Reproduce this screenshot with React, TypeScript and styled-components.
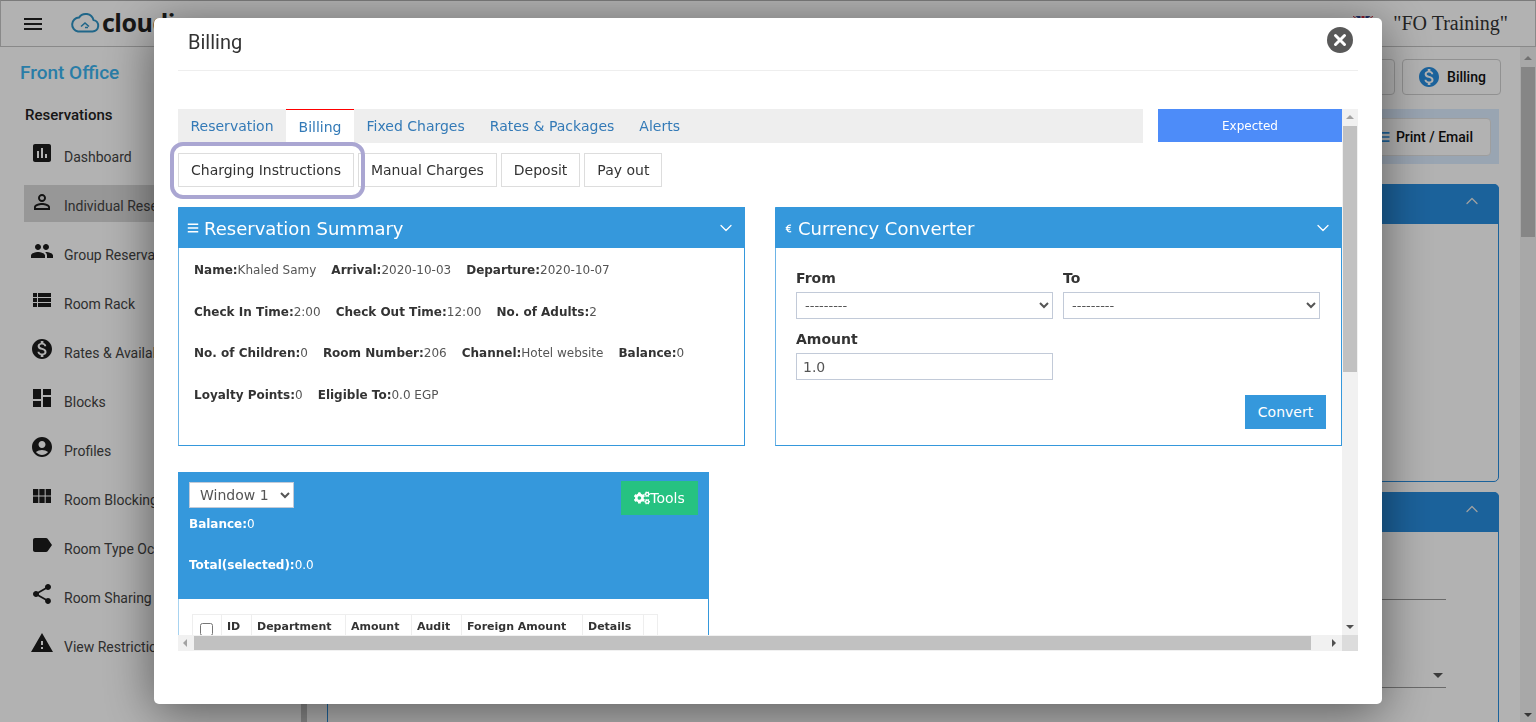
import styled, { createGlobalStyle } from 'styled-components';
import {
  MdAccountCircle,
  MdAssessment,
  MdDashboard,
  MdLabel,
  MdMenu,
  MdMonetizationOn,
  MdPeople,
  MdPersonOutline,
  MdShare,
  MdViewList,
  MdViewModule,
  MdWarning,
} from 'react-icons/md';
import { FaBars, FaCogs, FaEuroSign } from 'react-icons/fa';
import { ChevronDown, ChevronUp } from 'lucide-react';

const UI_FONT = `"DejaVu Sans", Verdana, sans-serif`;

const GlobalStyle = createGlobalStyle`
  html, body {
    margin: 0;
    padding: 0;
    height: 100%;
    overflow: hidden;
    background: #fff;
    font-family: Roboto, sans-serif;
  }
  * { box-sizing: border-box; }
`;

/* ---- page behind the dialog ---- */

const Page = styled.div`
  display: flex;
  flex-direction: column;
  width: 1536px;
  height: 722px;
  overflow: hidden;
`;

const TopBar = styled.header`
  display: flex;
  align-items: center;
  flex: 0 0 47px;
  padding-left: 20px;
  border: 1px solid #c4c4c4;
  border-top-color: #b0b0b0;
  color: #222;
`;

const Logo = styled.div`
  display: flex;
  align-items: center;
  gap: 2px;
  margin-left: 25px;
  margin-bottom: 4px;
  font-family: 'Open Sans', sans-serif;
  font-size: 25px;
  font-weight: 700;
  letter-spacing: -0.5px;
  color: #222;
`;

const TopBarRight = styled.div`
  display: flex;
  align-items: center;
  margin-left: auto;
  padding-right: 27px;
`;

const FlagIcon = styled.svg`
  margin-left: 308px;
  margin-right: 20px;
`;

const UserName = styled.span`
  font-family: 'Liberation Serif', serif;
  font-size: 20px;
  color: #333;
`;

const PageBody = styled.div`
  display: flex;
  flex: 1;
  min-height: 0;
`;

const Sidebar = styled.aside`
  flex: 0 0 301px;
  padding: 0 0 0 24px;
`;

const SideTitle = styled.h2`
  margin: 14px 0 0 -4px;
  font-size: 19px;
  line-height: 24px;
  font-weight: 500;
  color: #3cb4f0;
`;

const SideHeading = styled.h3`
  margin: 20px 0 11px 1px;
  font-size: 15px;
  line-height: 20px;
  font-weight: 500;
  color: #222;
`;

const SideItem = styled.div<{ $active?: boolean }>`
  display: flex;
  align-items: center;
  gap: 10px;
  height: 37px;
  margin-bottom: 12px;
  padding-left: 6px;
  font-size: 14px;
  color: #444;
  white-space: nowrap;
  background: ${(props) => (props.$active ? '#d9d9d9' : 'transparent')};
  svg {
    color: #1c1c1c;
    flex: none;
    margin-top: -4px;
  }
  span {
    padding-top: 4px;
  }
`;

const SideRail = styled.div`
  flex: 0 0 6px;
  background: #c4c4c4;
`;

const Main = styled.main`
  flex: 1;
  min-width: 0;
  padding: 12px 21px 0 20px;
`;

const PageActions = styled.div`
  display: flex;
  justify-content: flex-end;
  gap: 7px;
  margin-right: -2px;
  height: 36px;
`;

const PageAction = styled.button`
  display: flex;
  align-items: center;
  justify-content: center;
  gap: 6px;
  width: ${(props: { $w: number }) => props.$w}px;
  height: 36px;
  padding: 0;
  border: 1px solid #d0d0d0;
  border-radius: 4px;
  background: #fff;
  font-family: Roboto, sans-serif;
  font-size: 14px;
  font-weight: 500;
  color: #111;
  svg {
    color: #288ddf;
  }
`;

const PrintBand = styled.div`
  display: flex;
  justify-content: flex-end;
  align-items: center;
  height: 55px;
  margin-top: 14px;
  padding-right: 8px;
  background: #dcecff;
`;

const PrintButton = styled.button`
  display: flex;
  align-items: center;
  gap: 4px;
  height: 38px;
  padding: 0 17px 0 0;
  border: 1px solid #e3e3e3;
  border-radius: 4px;
  background: #fff;
  font-family: Roboto, sans-serif;
  font-size: 14px;
  font-weight: 500;
  color: #111;
  svg {
    color: #288ddf;
  }
`;

const BgPanel = styled.section<{ $h: number }>`
  height: ${(props) => props.$h}px;
  margin-top: ${(props: { $top?: number }) => props.$top ?? 10}px;
  border: 1px solid #288ddf;
  border-radius: 5px 5px 5px 5px;
`;

const BgPanelHead = styled.div`
  display: flex;
  justify-content: flex-end;
  align-items: center;
  height: 40px;
  padding: 0 17px 6px 0;
  margin: -1px -1px 0;
  border-radius: 5px 5px 0 0;
  background: #288ddf;
  color: #e6e6e6;
`;

const BgFields = styled.div`
  display: flex;
  flex-direction: column;
  align-items: flex-end;
  padding-right: 52px;
`;

const BgField = styled.div<{ $h: number }>`
  display: flex;
  align-items: flex-end;
  justify-content: flex-end;
  width: 400px;
  height: ${(props) => props.$h}px;
  padding: 0 3px 9px 0;
  border-bottom: 1px solid #999;
`;

const BgCaret = styled.i`
  width: 0;
  height: 0;
  border-left: 5px solid transparent;
  border-right: 5px solid transparent;
  border-top: 5px solid #555;
`;

const PageScroll = styled.div`
  position: relative;
  flex: 0 0 16px;
  background: #f1f1f1;
  padding-top: 20px;
`;

const PageThumb = styled.div`
  height: 170px;
  margin: 0 1px;
  background: #c1c1c1;
`;

const PageArrowDown = styled.i`
  position: absolute;
  left: 4px;
  bottom: 5px;
  border-left: 4px solid transparent;
  border-right: 4px solid transparent;
  border-top: 4px solid #505050;
`;

const PageArrowUp = styled.i`
  position: absolute;
  left: 4px;
  top: 9px;
  border-left: 4px solid transparent;
  border-right: 4px solid transparent;
  border-bottom: 4px solid #a3a3a3;
`;

/* ---- dialog ---- */

const Backdrop = styled.div`
  position: fixed;
  inset: 0;
  background: rgba(0, 0, 0, 0.3);
`;

const Modal = styled.div`
  position: fixed;
  left: 154px;
  top: 18px;
  width: 1228px;
  height: 686px;
  padding: 0 24px;
  border-radius: 5px;
  background: #fff;
  box-shadow: 0 8px 50px rgba(0, 0, 0, 0.5);
  font-family: ${UI_FONT};
`;

const ModalHeader = styled.div`
  display: flex;
  align-items: center;
  justify-content: space-between;
  height: 53px;
  padding: 0 5px 8px 10px;
  border-bottom: 1px solid #eee;
`;

const ModalTitle = styled.h4`
  margin: 3px 0 0;
  font-family: Roboto, sans-serif;
  font-size: 20px;
  line-height: 24px;
  font-weight: 400;
  color: #333;
`;

const CloseButton = styled.button`
  display: flex;
  width: 26px;
  height: 26px;
  padding: 0;
  border: 0;
  border-radius: 50%;
  background: #595959;
  align-items: center;
  justify-content: center;
`;

const ScrollFrame = styled.div`
  position: relative;
  display: grid;
  grid-template-columns: 1164px 16px;
  grid-template-rows: 526px 16px;
  margin-top: 38px;
`;

const Highlight = styled.div`
  position: absolute;
  left: -8px;
  top: 33px;
  width: 195px;
  height: 57px;
  border: 4px solid #aaa6d2;
  border-radius: 13px;
  pointer-events: none;
`;

const Viewport = styled.div`
  overflow: hidden;
`;

const VBar = styled.div`
  position: relative;
  background: #f1f1f1;
  padding-top: 17px;
`;

const VThumb = styled.div`
  height: 246px;
  margin: 0 1px;
  background: #c1c1c1;
`;

const HBar = styled.div`
  position: relative;
  background: #f1f1f1;
  padding: 1px 0 1px 16px;
`;

const HThumb = styled.div`
  width: 1117px;
  height: 14px;
  background: #c1c1c1;
`;

const Corner = styled.div`
  background: #dcdcdc;
`;

const ArrowUp = styled.i`
  position: absolute;
  top: 6px;
  left: 4px;
  border-left: 4px solid transparent;
  border-right: 4px solid transparent;
  border-bottom: 4px solid #a3a3a3;
`;

const ArrowDown = styled.i`
  position: absolute;
  bottom: 6px;
  left: 4px;
  border-left: 4px solid transparent;
  border-right: 4px solid transparent;
  border-top: 4px solid #505050;
`;

const ArrowLeft = styled.i`
  position: absolute;
  left: 5px;
  top: 4px;
  border-top: 4px solid transparent;
  border-bottom: 4px solid transparent;
  border-right: 4px solid #a3a3a3;
`;

const ArrowRight = styled.i`
  position: absolute;
  right: 6px;
  top: 4px;
  border-top: 4px solid transparent;
  border-bottom: 4px solid transparent;
  border-left: 4px solid #505050;
`;

const TabRow = styled.div`
  display: flex;
  height: 34px;
`;

const Tabs = styled.div`
  display: flex;
  width: 965px;
  background: #eee;
`;

const Tab = styled.a<{ $active?: boolean }>`
  display: block;
  padding: 0 12.5px;
  font-size: 14px;
  line-height: 34px;
  color: #337ab7;
  background: ${(props) => (props.$active ? '#fff' : 'transparent')};
  border-top: ${(props) => (props.$active ? '1px solid #f00' : '0')};
  white-space: nowrap;
`;

const StatusBadge = styled.div`
  width: 184px;
  height: 33px;
  margin-left: 15px;
  background: #4d8cf9;
  color: #fff;
  font-size: 12px;
  line-height: 34px;
  text-align: center;
`;

const SubTabs = styled.div`
  display: flex;
  gap: 4px;
  margin-top: 10px;
  height: 34px;
`;

const SubTab = styled.button`
  height: 34px;
  padding: 0 12px;
  border: 1px solid #ddd;
  background: #fff;
  font-family: ${UI_FONT};
  font-size: 14px;
  color: #333;
  white-space: nowrap;
`;

const PanelGrid = styled.div`
  display: grid;
  grid-template-columns: 567px 567px;
  gap: 30px;
  margin-top: 20px;
`;

const Panel = styled.section`
  height: 239px;
  border: 1px solid #3598dc;
  border-top-width: 1px;
  border-left-color: #6db4e6;
  background: #fff;
`;

const PanelHead = styled.div`
  display: flex;
  align-items: center;
  height: 40px;
  margin: 0 -1px;
  padding: 0 9px;
  background: #3598dc;
  color: #fff;
  font-size: 18px;
`;

const PanelTitle = styled.span`
  flex: 1;
  margin-left: 5px;
`;

const SummaryBody = styled.div`
  padding: 2px 15px;
`;

const InfoRow = styled.div`
  display: flex;
  gap: 15px;
  font-size: 12px;
  line-height: 41.6px;
  color: #555;
`;

const InfoLabel = styled.b`
  color: #333;
`;

const ConverterBody = styled.div`
  padding: 20px 15px 0 20px;
`;

const FormGrid = styled.div`
  display: grid;
  grid-template-columns: 257px 257px;
  column-gap: 10px;
`;

const FormField = styled.div`
  margin-bottom: 10px;
`;

const FormLabel = styled.label`
  display: block;
  margin-bottom: 4px;
  font-size: 14px;
  line-height: 20px;
  font-weight: 700;
  color: #333;
`;

const FormSelect = styled.select`
  display: block;
  width: 100%;
  height: 27px;
  padding: 0 4px;
  border: 1px solid #c2cad8;
  background: #fff;
  font-family: ${UI_FONT};
  font-size: 13px;
  color: #555;
`;

const FormInput = styled.input`
  display: block;
  width: 100%;
  height: 27px;
  padding: 0 6px;
  border: 1px solid #c2cad8;
  font-family: ${UI_FONT};
  font-size: 14px;
  color: #555;
`;

const ConvertRow = styled.div`
  display: flex;
  justify-content: flex-end;
  margin-top: 15px;
`;

const ConvertButton = styled.button`
  width: 81px;
  height: 34px;
  padding: 0;
  border: 0;
  background: #3598dc;
  color: #fff;
  font-family: ${UI_FONT};
  font-size: 14px;
`;

const WindowPanel = styled.section`
  width: 531px;
  margin-top: 26px;
  border: 1px solid #3598dc;
  border-left-color: #a8d3f0;
  height: 300px;
`;

const WindowHead = styled.div`
  height: 127px;
  margin: -1px -1px 0;
  padding: 9px 11px;
  background: #3598dc;
  color: #fff;
  font-size: 12px;
`;

const WindowControls = styled.div`
  display: flex;
  justify-content: space-between;
  height: 34px;
`;

const WindowSelect = styled.select`
  width: 105px;
  height: 26px;
  margin-top: 1px;
  padding: 0 6px;
  border: 1px solid #c2cad8;
  background: #fff;
  font-family: ${UI_FONT};
  font-size: 14px;
  color: #555;
`;

const ToolsButton = styled.button`
  display: flex;
  align-items: center;
  justify-content: center;
  width: 77px;
  height: 34px;
  padding: 0;
  border: 0;
  background: #26c281;
  color: #fff;
  font-family: ${UI_FONT};
  font-size: 14px;
`;

const WindowLine = styled.div`
  line-height: 18px;
  margin-bottom: 23px;
`;

const TableWrap = styled.div`
  padding: 15px 13px;
`;

const ChargeTable = styled.table`
  border-collapse: collapse;
  table-layout: fixed;
  width: 465px;
  font-size: 11px;
  color: #333;
  th {
    height: 36px;
    padding: 3px 5px 0;
    border: 1px solid #eee;
    text-align: left;
    vertical-align: top;
    line-height: 18px;
  }
`;

const RowCheck = styled.input`
  margin: 5px 0 0 2px;
  width: 13px;
  height: 13px;
`;

const menuItems = [
  { label: 'Dashboard', icon: MdAssessment },
  { label: 'Individual Reservations', icon: MdPersonOutline, active: true },
  { label: 'Group Reservations', icon: MdPeople },
  { label: 'Room Rack', icon: MdViewList },
  { label: 'Rates & Availability', icon: MdMonetizationOn },
  { label: 'Blocks', icon: MdDashboard },
  { label: 'Profiles', icon: MdAccountCircle },
  { label: 'Room Blocking', icon: MdViewModule },
  { label: 'Room Type Occupancy', icon: MdLabel },
  { label: 'Room Sharing', icon: MdShare },
  { label: 'View Restrictions', icon: MdWarning },
];

const summaryRows = [
  [
    ['Name:', 'Khaled Samy'],
    ['Arrival:', '2020-10-03'],
    ['Departure:', '2020-10-07'],
  ],
  [
    ['Check In Time:', '2:00'],
    ['Check Out Time:', '12:00'],
    ['No. of Adults:', '2'],
  ],
  [
    ['No. of Children:', '0'],
    ['Room Number:', '206'],
    ['Channel:', 'Hotel website'],
    ['Balance:', '0'],
  ],
  [
    ['Loyalty Points:', '0'],
    ['Eligible To:', '0.0 EGP'],
  ],
];

const tableColumns = [
  { title: '', width: 29 },
  { title: 'ID', width: 30 },
  { title: 'Department', width: 94 },
  { title: 'Amount', width: 66 },
  { title: 'Audit', width: 50 },
  { title: 'Foreign Amount', width: 121 },
  { title: 'Details', width: 61 },
  { title: '', width: 14 },
];

function CloudLogo() {
  return (
    <svg width="30" height="22" viewBox="0 0 30 22" fill="none" stroke="#2f93c4" strokeWidth="2">
      <path d="M8 20.5h14.5a5.8 5.8 0 0 0 1-11.5A8 8 0 0 0 9 6.6 7 7 0 0 0 8 20.5z" />
      <path d="M11 15.5l4-3.5 4 3.5M15 16.5h3" strokeWidth="1.6" />
    </svg>
  );
}

function App() {
  return (
    <>
      <GlobalStyle />
      <Page>
        <TopBar>
          <MdMenu size={24} />
          <Logo>
            <CloudLogo />
            cloudinn
          </Logo>
          <TopBarRight>
            <svg width="14" height="12" viewBox="0 0 14 12" fill="none" stroke="#333" strokeWidth="1.5">
              <path d="M3 0v4M11 0v4M1 4h12" />
            </svg>
            <FlagIcon width="20" height="16" viewBox="0 0 20 16">
              <rect width="20" height="16" fill="#2b3f8c" />
              <path d="M0 0l20 16M20 0L0 16" stroke="#eee" strokeWidth="3" />
              <path d="M0 0l20 16M20 0L0 16" stroke="#c8283c" strokeWidth="1" />
              <path d="M10 0v16M0 8h20" stroke="#eee" strokeWidth="5" />
              <path d="M10 0v16M0 8h20" stroke="#c8283c" strokeWidth="3" />
            </FlagIcon>
            <UserName>"FO Training"</UserName>
          </TopBarRight>
        </TopBar>
        <PageBody>
          <Sidebar>
            <SideTitle>Front Office</SideTitle>
            <SideHeading>Reservations</SideHeading>
            {menuItems.map(({ label, icon: Icon, active }) => (
              <SideItem key={label} $active={active}>
                <Icon size={24} />
                <span>{label}</span>
              </SideItem>
            ))}
          </Sidebar>
          <SideRail />
          <Main>
            <PageActions>
              <PageAction $w={110}>Invoice</PageAction>
              <PageAction $w={99}>
                <MdMonetizationOn size={24} />
                Billing
              </PageAction>
            </PageActions>
            <PrintBand>
              <PrintButton>
                <MdMenu size={20} />
                Print / Email
              </PrintButton>
            </PrintBand>
            <BgPanel $h={298} $top={20}>
              <BgPanelHead>
                <ChevronUp size={20} strokeWidth={1.5} />
              </BgPanelHead>
            </BgPanel>
            <BgPanel $h={300} $top={10}>
              <BgPanelHead>
                <ChevronUp size={20} strokeWidth={1.5} />
              </BgPanelHead>
              <BgFields>
                <BgField $h={68} />
                <BgField $h={88}>
                  <BgCaret />
                </BgField>
              </BgFields>
            </BgPanel>
          </Main>
          <PageScroll>
            <PageArrowUp />
            <PageThumb />
            <PageArrowDown />
          </PageScroll>
        </PageBody>
      </Page>
      <Backdrop />
      <Modal>
        <ModalHeader>
          <ModalTitle>Billing</ModalTitle>
          <CloseButton aria-label="Close">
            <svg width="14" height="14" viewBox="0 0 14 14" stroke="#fff" strokeWidth="3" strokeLinecap="round">
              <path d="M2.5 2.5l9 9M11.5 2.5l-9 9" />
            </svg>
          </CloseButton>
        </ModalHeader>
        <ScrollFrame>
          <Viewport>
            <TabRow>
              <Tabs>
                <Tab>Reservation</Tab>
                <Tab $active>Billing</Tab>
                <Tab>Fixed Charges</Tab>
                <Tab>Rates &amp; Packages</Tab>
                <Tab>Alerts</Tab>
              </Tabs>
              <StatusBadge>Expected</StatusBadge>
            </TabRow>
            <SubTabs>
              <SubTab>Charging Instructions</SubTab>
              <SubTab>Manual Charges</SubTab>
              <SubTab>Deposit</SubTab>
              <SubTab>Pay out</SubTab>
            </SubTabs>
            <PanelGrid>
              <Panel>
                <PanelHead>
                  <FaBars size={12} />
                  <PanelTitle>Reservation Summary</PanelTitle>
                  <ChevronDown size={20} strokeWidth={1.5} />
                </PanelHead>
                <SummaryBody>
                  {summaryRows.map((row) => (
                    <InfoRow key={row[0][0]}>
                      {row.map(([label, value]) => (
                        <span key={label}>
                          <InfoLabel>{label}</InfoLabel>
                          {value}
                        </span>
                      ))}
                    </InfoRow>
                  ))}
                </SummaryBody>
              </Panel>
              <Panel>
                <PanelHead>
                  <FaEuroSign size={9} />
                  <PanelTitle>Currency Converter</PanelTitle>
                  <ChevronDown size={20} strokeWidth={1.5} />
                </PanelHead>
                <ConverterBody>
                  <FormGrid>
                    <FormField>
                      <FormLabel>From</FormLabel>
                      <FormSelect defaultValue="">
                        <option value="">---------</option>
                      </FormSelect>
                    </FormField>
                    <FormField>
                      <FormLabel>To</FormLabel>
                      <FormSelect defaultValue="">
                        <option value="">---------</option>
                      </FormSelect>
                    </FormField>
                    <div>
                      <FormLabel>Amount</FormLabel>
                      <FormInput defaultValue="1.0" />
                    </div>
                  </FormGrid>
                  <ConvertRow>
                    <ConvertButton>Convert</ConvertButton>
                  </ConvertRow>
                </ConverterBody>
              </Panel>
            </PanelGrid>
            <WindowPanel>
              <WindowHead>
                <WindowControls>
                  <WindowSelect defaultValue="1">
                    <option value="1">Window 1</option>
                  </WindowSelect>
                  <ToolsButton>
                    <FaCogs size={16} />
                    Tools
                  </ToolsButton>
                </WindowControls>
                <WindowLine>
                  <b>Balance:</b>0
                </WindowLine>
                <WindowLine>
                  <b>Total(selected):</b>0.0
                </WindowLine>
              </WindowHead>
              <TableWrap>
                <ChargeTable>
                  <colgroup>
                    {tableColumns.map((col, i) => (
                      <col key={i} width={col.width} />
                    ))}
                  </colgroup>
                  <thead>
                    <tr>
                      {tableColumns.map((col, i) => (
                        <th key={i}>{i === 0 ? <RowCheck type="checkbox" /> : col.title}</th>
                      ))}
                    </tr>
                  </thead>
                </ChargeTable>
              </TableWrap>
            </WindowPanel>
          </Viewport>
          <VBar>
            <ArrowUp />
            <VThumb />
            <ArrowDown />
          </VBar>
          <HBar>
            <ArrowLeft />
            <HThumb />
            <ArrowRight />
          </HBar>
          <Corner />
          <Highlight />
        </ScrollFrame>
      </Modal>
    </>
  );
}

export default App;
